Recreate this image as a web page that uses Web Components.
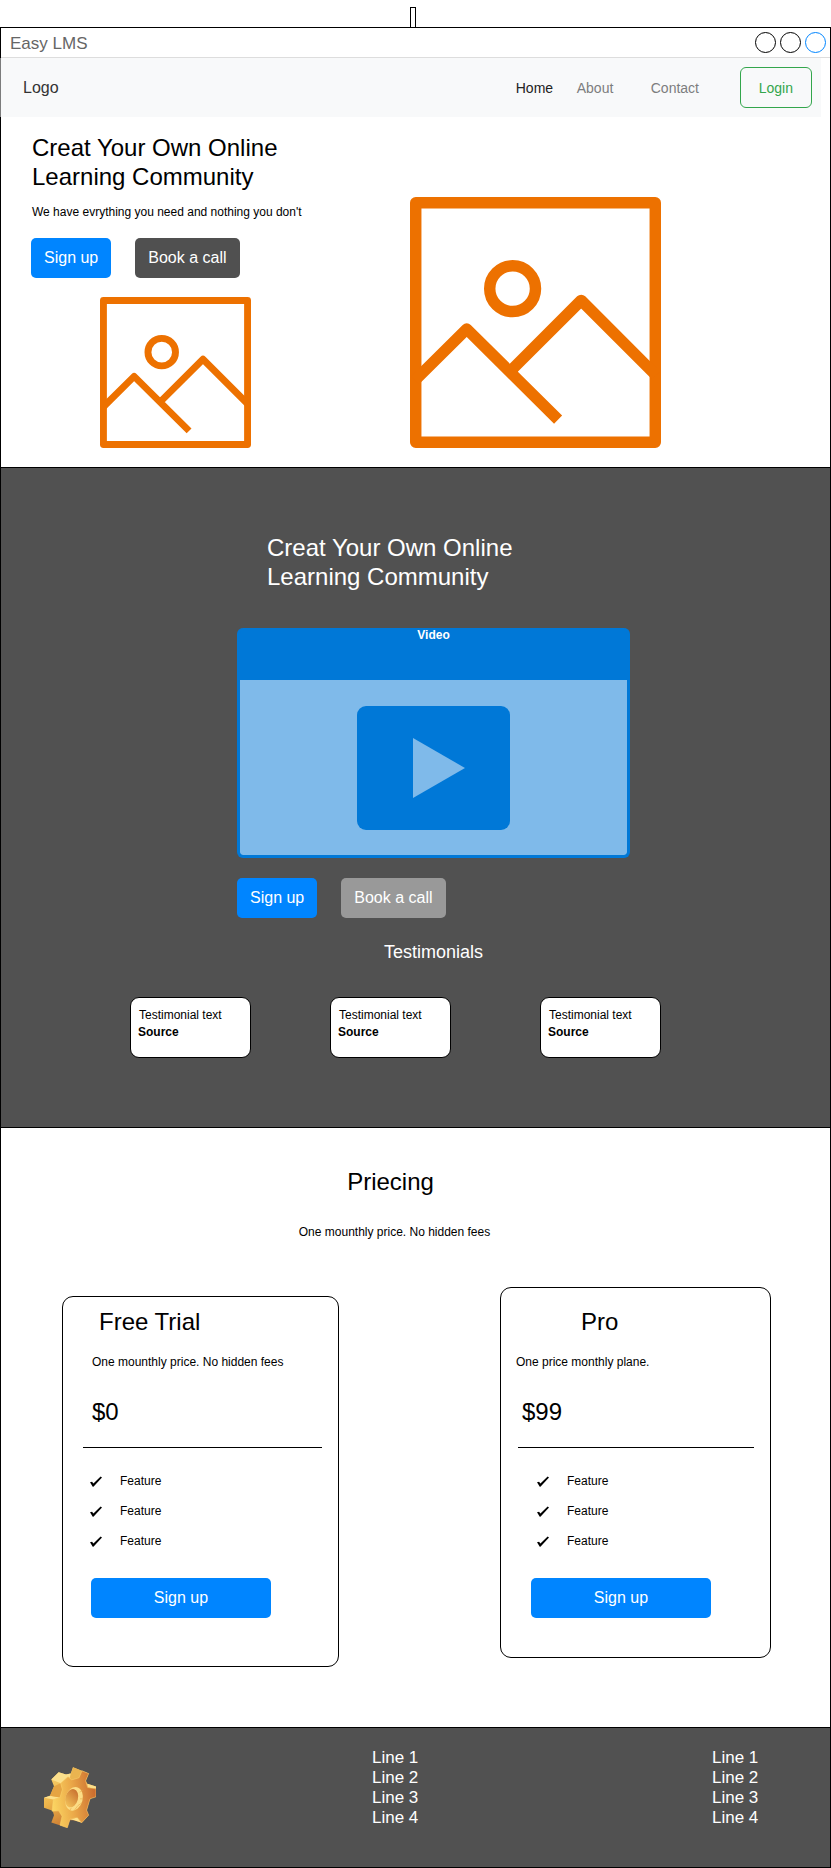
<!DOCTYPE html>
<html lang="en">
<head>
<meta charset="utf-8">
<meta name="viewport" content="width=device-width, initial-scale=1">
<title>Easy LMS</title>
<style>
  body { margin: 0; background: #fff; color: #000; font-family: "Liberation Sans", Arial, sans-serif; font-size: 12px; line-height: 14px; }
</style>
</head>
<body>
<lms-window heading="Easy LMS">
  <lms-nav></lms-nav>
  <lms-hero></lms-hero>
  <lms-showcase>
    <testimonial-card><span slot="text">Testimonial text</span><span slot="source">Source</span></testimonial-card>
    <testimonial-card><span slot="text">Testimonial text</span><span slot="source">Source</span></testimonial-card>
    <testimonial-card><span slot="text">Testimonial text</span><span slot="source">Source</span></testimonial-card>
  </lms-showcase>
  <lms-pricing></lms-pricing>
  <lms-footer></lms-footer>
</lms-window>

<script>
const define = (name, html) => {
  const template = document.createElement('template');
  template.innerHTML = html;
  customElements.define(name, class extends HTMLElement {
    constructor() {
      super();
      this.attachShadow({ mode: 'open' }).append(template.content.cloneNode(true));
    }
    connectedCallback() {
      const title = this.shadowRoot.querySelector('[data-heading]');
      if (title) title.textContent = this.getAttribute('heading');
    }
  });
};

/* Button: colour from --button-color */
define('lms-button', `
<style>
  :host { display: block; }
  button { display: block; box-sizing: border-box; width: 100%; height: 40px; margin: 0; padding: 0 13px; border: 0; border-radius: 5px;
    background: var(--button-color, #0085ff); color: #fff; font: 16px/20px "Liberation Sans", Arial, sans-serif; white-space: nowrap; cursor: pointer; }
</style>
<button type="button"><slot></slot></button>`);

/* Picture placeholder */
define('picture-frame', `
<style>
  :host { display: block; max-width: 100%; }
  svg { display: block; width: 100%; height: auto; }
</style>
<svg viewBox="0 0 250 250" fill="none" stroke="#ed7100" stroke-width="11.4" stroke-linejoin="round" aria-hidden="true">
  <rect x="5.7" y="5.7" width="238.6" height="238.6"/>
  <circle cx="102.2" cy="91.3" r="22.8"/>
  <path d="M5 182.5 56.5 131.5 147.5 221.7M99.3 174.1 170.5 103 245 177.5"/>
</svg>`);

/* Window frame */
define('lms-window', `
<style>
  :host { display: block; padding-top: 7px; }
  .tab { display: flex; justify-content: center; padding-right: 5px; }
  .tab i { box-sizing: border-box; width: 6px; height: 20px; border: 1px solid #000; border-bottom: 0; }
  .frame { border: 1px solid #000; }
  header { display: flex; align-items: center; justify-content: space-between; height: 29px; padding: 0 4px 0 9px; border-bottom: 1px solid #ddd; color: #666; font-size: 17px; line-height: 20px; }
  header span { padding-top: 2px; }
  .dots { display: flex; gap: 4px; }
  .dots i { box-sizing: border-box; width: 21px; height: 21px; border: 1px solid #000; border-radius: 50%; }
  .dots i:last-child { border-color: #0085ff; }
</style>
<div class="tab"><i></i></div>
<div class="frame">
  <header><span data-heading></span><div class="dots"><i></i><i></i><i></i></div></header>
  <slot></slot>
</div>`);

define('lms-nav', `
<style>
  :host { display: block; margin: 0 9px 0 -1px; }
  nav { display: flex; align-items: center; height: 59px; padding: 0 9px 0 22px; border-left: 1px solid #7c7c7c; background: #f8f9fa; font-size: 14px; line-height: 16px; }
  a { text-decoration: none; color: #7d7d7e; }
  .logo { flex: 1; font-size: 16px; color: #333; }
  .links { display: grid; grid-template-columns: 61px 74px 89px; }
  .links a:first-child { color: #222; }
  .login { box-sizing: border-box; height: 41px; padding: 0 18px; border: 1px solid #33a64c; border-radius: 6px; color: #33a64c; background: none; font: inherit; cursor: pointer; }
</style>
<nav>
  <a class="logo" href="#">Logo</a>
  <div class="links"><a href="#">Home</a><a href="#">About</a><a href="#">Contact</a></div>
  <button class="login" type="button">Login</button>
</nav>`);

define('lms-hero', `
<style>
  :host { display: grid; grid-template-columns: 409fr 420fr; align-items: end; padding: 16px 0 19px; }
  h1 { margin: 0 0 14px 31px; font-size: 24px; line-height: 29px; font-weight: 400; }
  p { margin: 0 0 19px 31px; }
  .actions { display: flex; gap: 24px; margin: 0 0 19px 30px; }
  .dark { --button-color: #505050; }
  .small { width: 151px; margin-left: 99px; }
  .large { width: 251px; }
</style>
<div>
  <h1>Creat Your Own Online<br>Learning Community</h1>
  <p>We have evrything you need and nothing you don't</p>
  <div class="actions"><lms-button>Sign up</lms-button><lms-button class="dark">Book a call</lms-button></div>
  <picture-frame class="small"></picture-frame>
</div>
<picture-frame class="large"></picture-frame>`);

define('video-player', `
<style>
  :host { display: flex; flex-direction: column; box-sizing: border-box; height: 230px; border: 3px solid #0078d7; border-top-width: 0; border-radius: 6px; background: #0078d7; overflow: hidden; }
  .title { height: 52px; color: #fff; font-weight: 700; text-align: center; }
  .screen { display: flex; flex: 1; align-items: center; justify-content: center; border-radius: 0 0 3px 3px; background: #7fbaea; }
  button { display: flex; align-items: center; justify-content: center; width: 153px; height: 124px; padding: 0 0 0 10px; border: 0; border-radius: 9px; background: #0078d7; cursor: pointer; }
</style>
<div class="title"><slot></slot></div>
<div class="screen"><button type="button"><svg width="52" height="60" viewBox="0 0 52 60" aria-hidden="true"><path fill="#7fbaea" d="M0 0 52 30 0 60z"/></svg></button></div>`);

define('testimonial-card', `
<style>
  :host { display: block; box-sizing: border-box; width: 121px; height: 61px; padding: 9px 8px; border: 1px solid #000; border-radius: 9px; background: #fff; color: #000; line-height: 17px; }
  div { white-space: nowrap; }
  .source { font-weight: 700; margin-left: -1px; }
</style>
<div><slot name="text"></slot></div>
<div class="source"><slot name="source"></slot></div>`);

define('lms-showcase', `
<style>
  :host { display: block; padding: 65px 0 69px; border-top: 1px solid #000; border-bottom: 1px solid #000; background: #515151; color: #fff; }
  .main { width: 393px; margin: 0 auto; padding-left: 36px; }
  h2 { margin: 0 0 37px 30px; font-size: 24px; line-height: 29px; font-weight: 400; }
  .actions { display: flex; gap: 24px; margin: 20px 0 23px; }
  .muted { --button-color: #999; }
  h3 { margin: 0 0 34px; font-size: 18px; line-height: 22px; font-weight: 400; text-align: center; }
  .cards { display: grid; grid-template-columns: 200fr 210fr 290fr; padding-left: 129px; }
</style>
<div class="main">
  <h2>Creat Your Own Online<br>Learning Community</h2>
  <video-player>Video</video-player>
  <div class="actions"><lms-button>Sign up</lms-button><lms-button class="muted">Book a call</lms-button></div>
  <h3>Testimonials</h3>
</div>
<div class="cards"><slot></slot></div>`);

/* Feature row with a tick */
define('plan-feature', `
<style>
  :host { display: flex; align-items: center; gap: 18px; }
  svg { flex: none; }
</style>
<svg width="12" height="11" viewBox="149 230 35 31" aria-hidden="true"><path d="M149 248l6-2 4 5 21-20 4 3-25 27h-2z"/></svg>
<slot></slot>`);

define('price-card', `
<style>
  :host { display: block; box-sizing: border-box; border: 1px solid #000; border-radius: 11px; }
  h3, .price { font-size: 24px; line-height: 29px; font-weight: 400; }
  h3 { margin: 0 0 19px var(--title-indent); }
  .note { margin-left: var(--note-indent); }
  .price { margin: 28px 0 21px var(--price-indent); }
  hr { height: 1px; margin: 0 16px 26px var(--rule-indent); border: 0; background: #000; }
  .features { display: grid; gap: 16px; margin: 0 0 30px var(--feature-indent); }
  lms-button { width: 180px; margin-left: var(--button-indent); }
</style>
<h3 data-heading></h3>
<div class="note"><slot name="note"></slot></div>
<div class="price"><slot name="price"></slot></div>
<hr>
<div class="features"><slot></slot></div>
<lms-button>Sign up</lms-button>`);

define('lms-pricing', `
<style>
  :host { display: block; padding: 39px 59px 60px 61px; }
  header { margin: 0 0 48px; text-align: center; }
  h2 { margin: 0 52px 29px 0; font-size: 24px; line-height: 29px; font-weight: 400; }
  p { margin: 0 44px 0 0; }
  .plans { display: grid; grid-template-columns: 277fr 271fr; gap: 161px; align-items: start; }
  .free { margin-top: 9px; padding: 10px 0 48px;
    --title-indent: 36px; --note-indent: 29px; --price-indent: 29px; --rule-indent: 20px; --feature-indent: 27px; --button-indent: 28px; }
  .pro { padding: 19px 0 39px;
    --title-indent: 80px; --note-indent: 15px; --price-indent: 21px; --rule-indent: 17px; --feature-indent: 36px; --button-indent: 30px; }
</style>
<header>
  <h2>Priecing</h2>
  <p>One mounthly price. No hidden fees</p>
</header>
<div class="plans">
  <price-card class="free" heading="Free Trial">
    <span slot="note">One mounthly price. No hidden fees</span>
    <span slot="price">$0</span>
    <plan-feature>Feature</plan-feature><plan-feature>Feature</plan-feature><plan-feature>Feature</plan-feature>
  </price-card>
  <price-card class="pro" heading="Pro">
    <span slot="note">One price monthly plane.</span>
    <span slot="price">$99</span>
    <plan-feature>Feature</plan-feature><plan-feature>Feature</plan-feature><plan-feature>Feature</plan-feature>
  </price-card>
</div>`);

define('gear-icon', `
<style>:host { display: block; } svg { display: block; }</style>
<svg width="52" height="61" viewBox="132 171 156 182" aria-hidden="true">
  <defs>
    <linearGradient id="side" x1="0" y1="0" x2="0.5" y2="1"><stop offset="0" stop-color="#fbd978"/><stop offset="0.5" stop-color="#eeb64c"/><stop offset="1" stop-color="#c5702e"/></linearGradient>
    <linearGradient id="face" x1="0" y1="0.5" x2="1" y2="0.35"><stop offset="0" stop-color="#fbd562"/><stop offset="0.45" stop-color="#eba949"/><stop offset="1" stop-color="#c9692d"/></linearGradient>
    <linearGradient id="bore" x1="0.7" y1="0" x2="0.3" y2="1"><stop offset="0" stop-color="#c8702f"/><stop offset="1" stop-color="#f3c25a"/></linearGradient>
  </defs>
  <path fill="url(#side)" d="M219 171l47 19-9 22 5 9 26 8v31l-18 6-10 34 6 15-21 23-23-8-12 0-8 23-48-16 8-22-4-13-26-9v-30l18-6 12-29-8-20 22-22 22 7 14-3z"/>
  <path fill="#fce08c" d="M154 208l22-22 22 7 14-3-2 13-6-3-22 19zM132 263l18-6 30 5-20 6zM262 221l26 8v7l-25-4zM210 327l12-3 10-2 13 16-23-8z"/>
  <path fill="#e5a443" d="M162 228l20-9 5 19-7 24-30-5z"/>
  <path fill="#eab450" d="M219 171l47 19-20-8-9 21-22 6-5-8z"/>
  <path fill="url(#face)" stroke="#fbd36f" stroke-width="1.5" d="M237 203l9-21 20 8-9 22 6 20 25 4v24l-18 6-10 34 6 15-21 23-13-16-22 5-8 26-22-8 6-27-10-16-20 1 4-35 20-6 7-24-5-19 22-19 11 9z"/>
  <ellipse cx="222" cy="266" rx="26" ry="36" fill="#fbdc85" transform="rotate(15 222 266)"/>
  <path d="M224 299l10-13 12-8M239 246l9-5M240 266h8M214 293l-4 7" stroke="#e8ad4e" stroke-width="2" fill="none"/>
  <ellipse cx="215" cy="264" rx="19" ry="28" fill="url(#bore)" transform="rotate(15 215 264)"/>
</svg>`);

define('lms-footer', `
<style>
  :host { display: grid; grid-template-columns: 371fr 340fr 118fr; align-items: start; min-height: 119px; padding-top: 20px; border-top: 1px solid #000; background: #515151; color: #fff; }
  gear-icon { margin: 19px 0 0 43px; }
  ul { margin: 0; padding: 0; list-style: none; font-size: 17px; line-height: 20px; }
</style>
<gear-icon></gear-icon>
<ul><li>Line 1</li><li>Line 2</li><li>Line 3</li><li>Line 4</li></ul>
<ul><li>Line 1</li><li>Line 2</li><li>Line 3</li><li>Line 4</li></ul>`);
</script>
</body>
</html>
